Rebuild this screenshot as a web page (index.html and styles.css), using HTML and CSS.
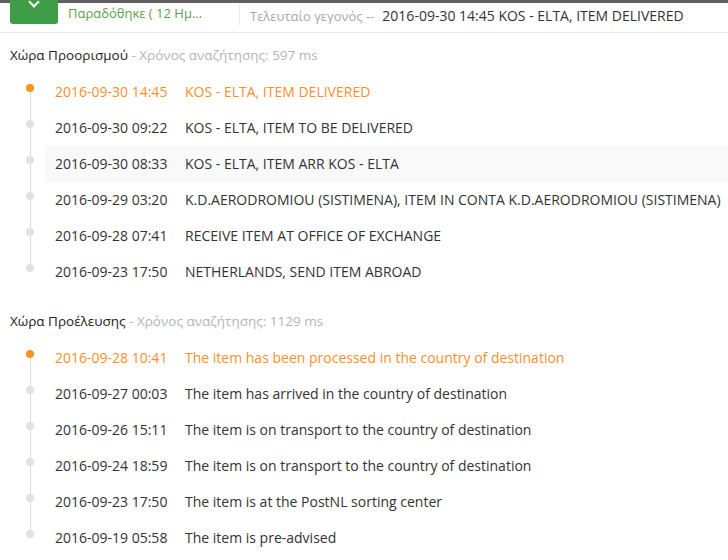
FILE: index.html
```html
<!DOCTYPE html>
<html>
<head>
<meta charset="utf-8">
<link rel="stylesheet" href="styles.css">
</head>
<body>
<div class="topbar">
  <div class="status-btn"><span class="chev"></span></div>
  <div class="status-text">Παραδόθηκε ( 12 Ημ...</div>
  <div class="sep"></div>
  <div class="last"><span class="last-label">Τελευταίο γεγονός --</span><span class="last-val">2016-09-30 14:45 KOS - ELTA, ITEM DELIVERED</span></div>
</div>

<div class="section">
  <div class="sec-head">Χώρα Προορισμού <span class="muted">- Χρόνος αναζήτησης: 597 ms</span></div>
  <ul class="timeline">
    <li class="ev latest"><span class="date">2016-09-30 14:45</span><span class="desc">KOS - ELTA, ITEM DELIVERED</span></li>
    <li class="ev"><span class="date">2016-09-30 09:22</span><span class="desc">KOS - ELTA, ITEM TO BE DELIVERED</span></li>
    <li class="ev hover"><span class="date">2016-09-30 08:33</span><span class="desc">KOS - ELTA, ITEM ARR KOS - ELTA</span></li>
    <li class="ev"><span class="date">2016-09-29 03:20</span><span class="desc">K.D.AERODROMIOU (SISTIMENA), ITEM IN CONTA K.D.AERODROMIOU (SISTIMENA)</span></li>
    <li class="ev"><span class="date">2016-09-28 07:41</span><span class="desc">RECEIVE ITEM AT OFFICE OF EXCHANGE</span></li>
    <li class="ev"><span class="date">2016-09-23 17:50</span><span class="desc">NETHERLANDS, SEND ITEM ABROAD</span></li>
  </ul>
</div>

<div class="section second">
  <div class="sec-head">Χώρα Προέλευσης <span class="muted">- Χρόνος αναζήτησης: 1129 ms</span></div>
  <ul class="timeline">
    <li class="ev latest"><span class="date">2016-09-28 10:41</span><span class="desc">The item has been processed in the country of destination</span></li>
    <li class="ev"><span class="date">2016-09-27 00:03</span><span class="desc">The item has arrived in the country of destination</span></li>
    <li class="ev"><span class="date">2016-09-26 15:11</span><span class="desc">The item is on transport to the country of destination</span></li>
    <li class="ev"><span class="date">2016-09-24 18:59</span><span class="desc">The item is on transport to the country of destination</span></li>
    <li class="ev"><span class="date">2016-09-23 17:50</span><span class="desc">The item is at the PostNL sorting center</span></li>
    <li class="ev"><span class="date">2016-09-19 05:58</span><span class="desc">The item is pre-advised</span></li>
  </ul>
</div>
</body>
</html>
```

FILE: styles.css
```css
html, body {
  margin: 0;
  padding: 0;
  background: #fff;
}
body {
  font-family: "Open Sans", "Noto Sans", sans-serif;
  font-size: 14px;
  color: #333;
  width: 728px;
  overflow: hidden;
}
.topbar {
  position: relative;
  height: 33px;
  border-bottom: 1px solid #e6e6e6;
  border-top: 3px solid #5f5f5f;
  box-sizing: border-box;
  display: flex;
  align-items: flex-start;
}
.status-btn {
  position: relative;
  margin-top: -3px;
  margin-left: 10px;
  width: 48px;
  height: 24px;
  background: #3f9d47;
  border-radius: 0 0 3px 3px;
}
.chev {
  position: absolute;
  left: 20px;
  top: -2px;
  width: 6px;
  height: 6px;
  border-right: 2px solid #fff;
  border-bottom: 2px solid #fff;
  transform: rotate(45deg);
}
.status-text {
  margin-left: 10px;
  color: #5ba24c;
  font-size: 13px;
  line-height: 26px;
  margin-top: -3px;
  width: 171px;
  white-space: nowrap;
}
.sep {
  width: 1px;
  height: 21px;
  background: #ececec;
  margin-top: 1px;
}
.last {
  margin-left: 10px;
  line-height: 26px;
  margin-top: 0px;
  white-space: nowrap;
}
.last-label {
  color: #a8a8a8;
  font-size: 13px;
  margin-right: 8px;
}
.last-val {
  color: #333;
  font-size: 14px;
}
.section {
  padding-top: 11px;
}
.section.second {
  padding-top: 20px;
}
.sec-head {
  margin-left: 10px;
  font-size: 13.5px;
  line-height: 22px;
  color: #222;
  white-space: nowrap;
}
.muted {
  color: #b5b5b5;
}
.timeline {
  list-style: none;
  margin: 8px 0 0 0;
  padding: 0;
  position: relative;
}
.timeline::before {
  content: "";
  position: absolute;
  left: 30px;
  top: 14px;
  bottom: 22px;
  width: 1px;
  background: #dedede;
}
.ev {
  position: relative;
  margin-left: 45px;
  padding-left: 10px;
  height: 36px;
  line-height: 36px;
  display: flex;
  white-space: nowrap;
}
.ev::before {
  content: "";
  position: absolute;
  left: -19px;
  top: 10px;
  width: 8px;
  height: 8px;
  border-radius: 50%;
  background: #e2e2e2;
}
.ev.latest::before {
  background: #f7931e;
}
.ev.latest {
  color: #f8902c;
}
.ev.hover {
  background: #f9f9f9;
}
.date {
  width: 130px;
  flex: none;
}
.desc {
  flex: none;
}
```
